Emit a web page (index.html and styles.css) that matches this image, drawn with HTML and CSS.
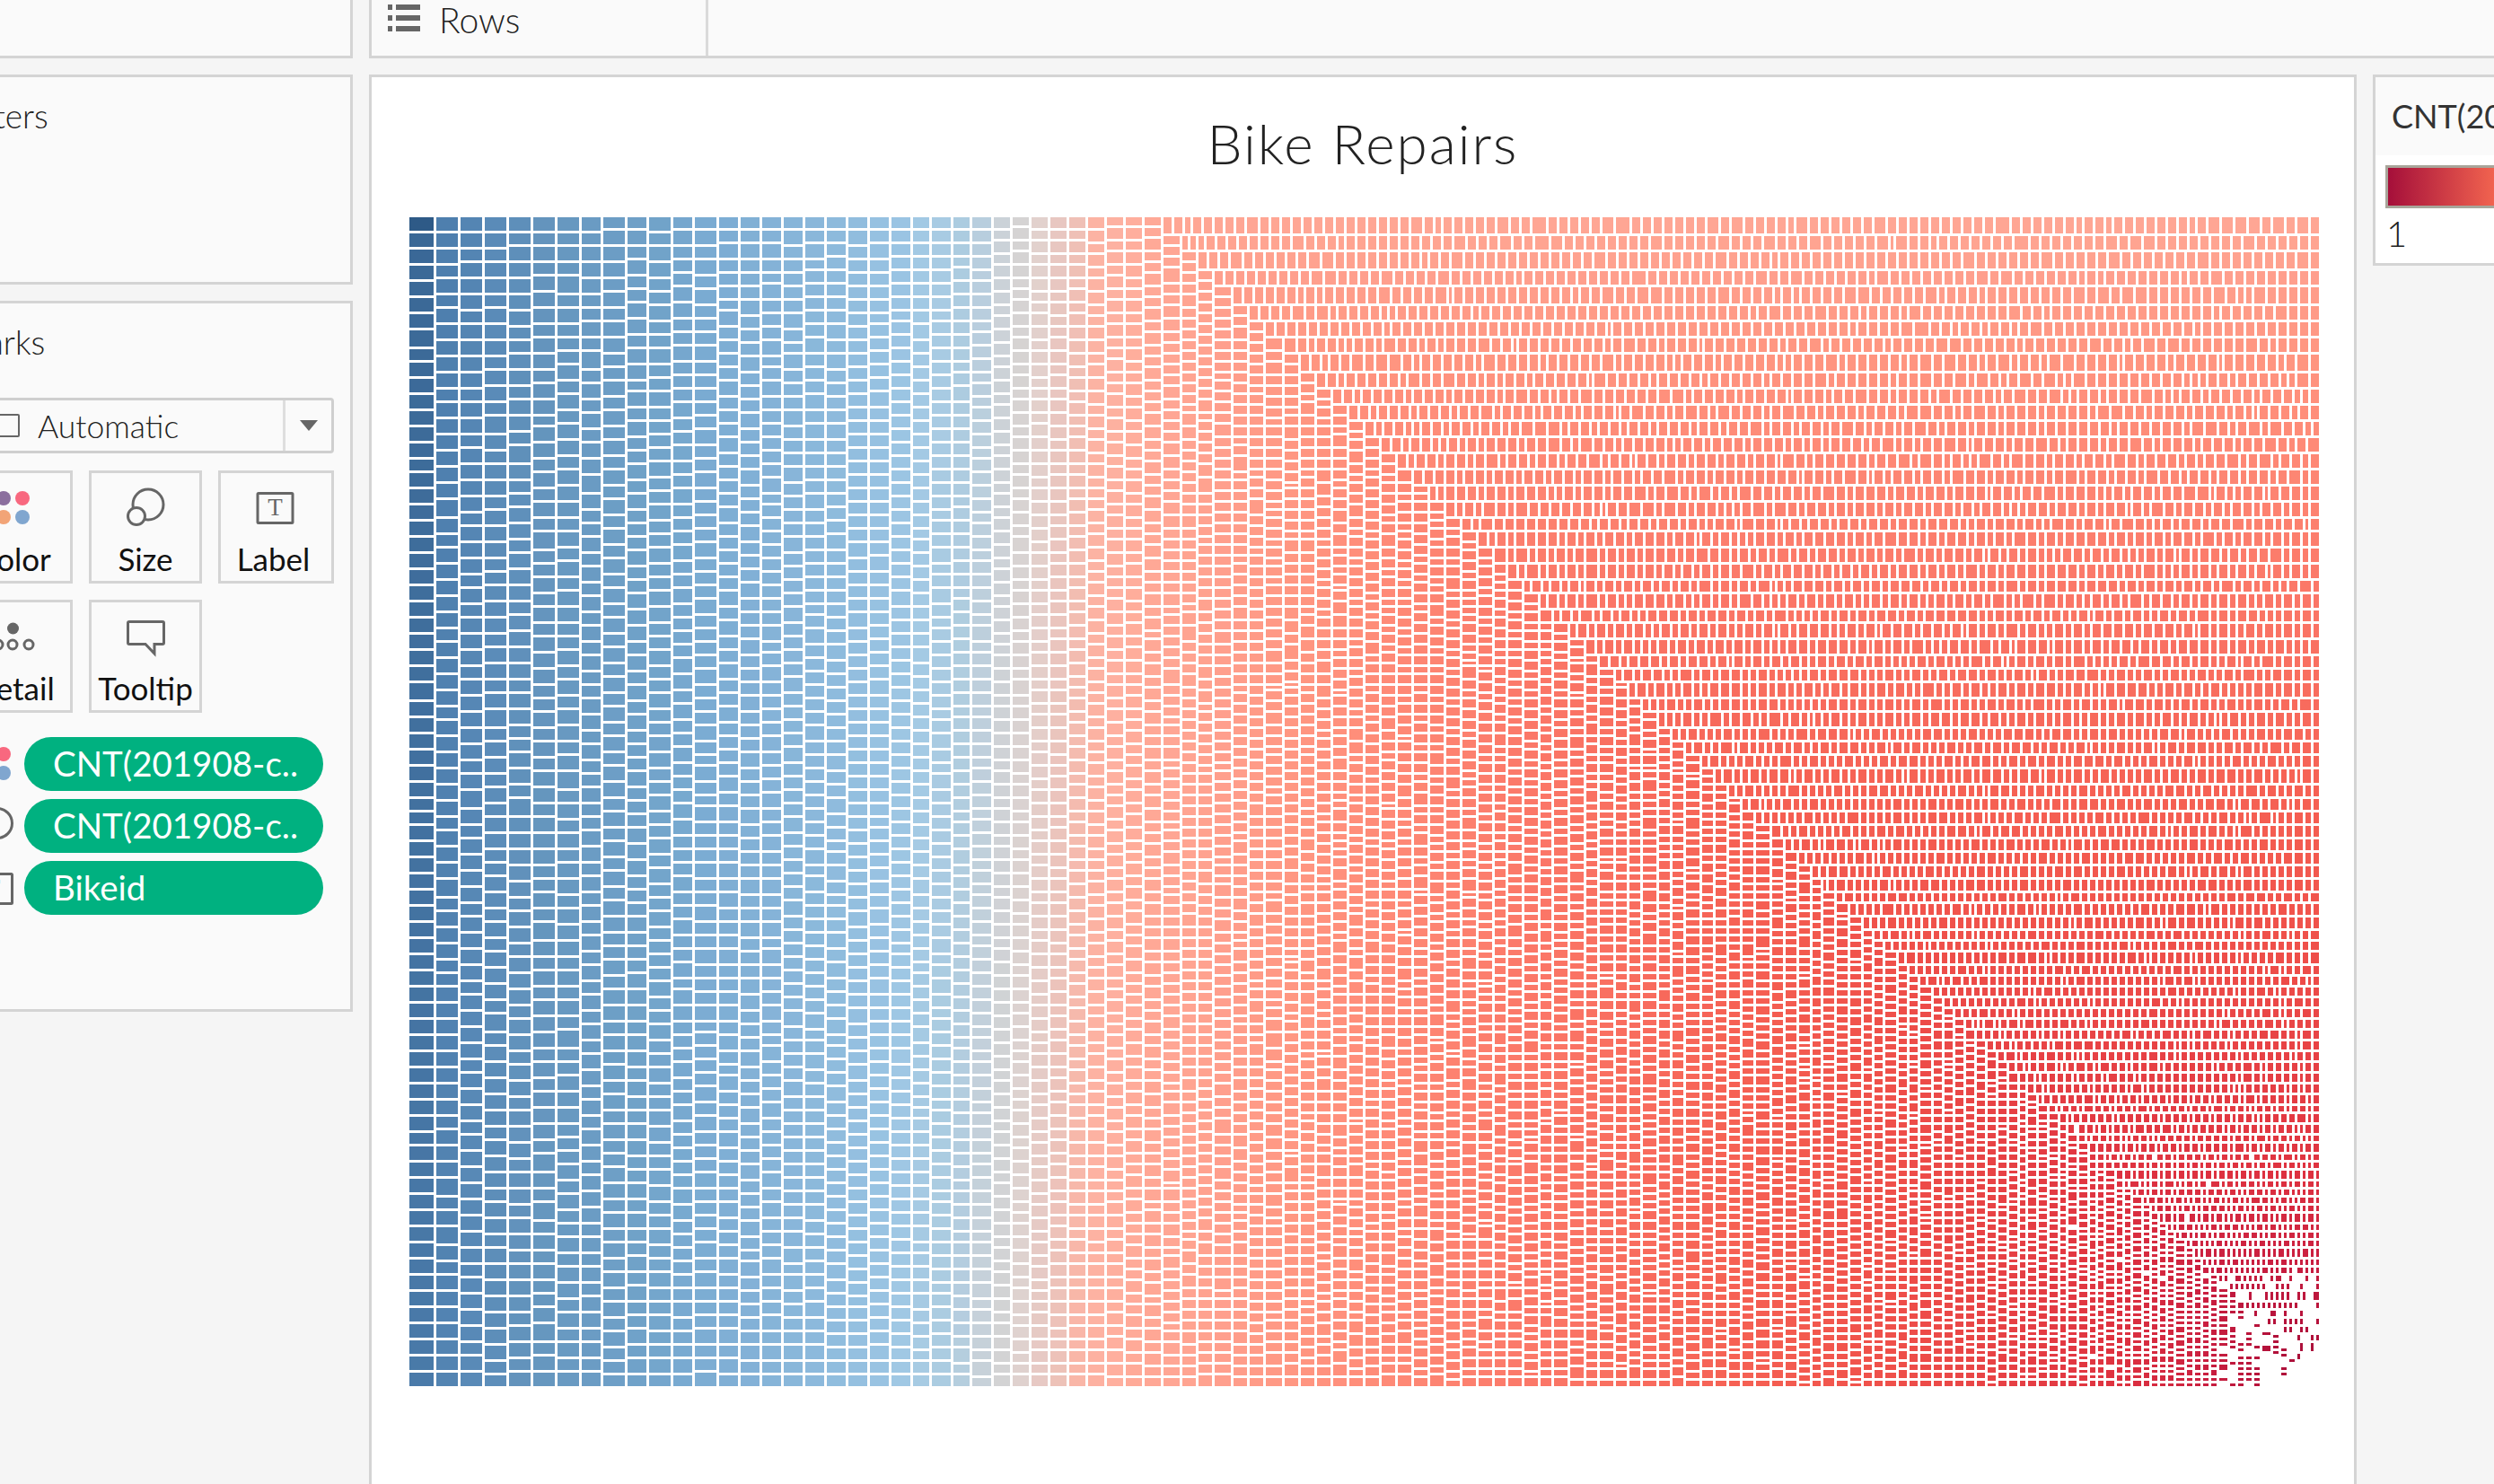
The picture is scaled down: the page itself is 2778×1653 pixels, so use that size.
FILE: index.html
```html
<!DOCTYPE html>
<html lang="en">
<head>
<meta charset="utf-8">
<title>Bike Repairs</title>
<link rel="stylesheet" href="styles.css">
</head>
<body>
<div class="app">
  <aside class="sidebar">
    <div class="panel shelf-stub"></div>
    <section class="panel filters"><h2 class="card-title">Filters</h2></section>
    <section class="panel marks">
      <h2 class="card-title">Marks</h2>
      <div class="dropdown">
        <span class="dropdown-check"></span>
        <span class="dropdown-text">Automatic</span>
        <span class="dropdown-arrow"><span class="triangle"></span></span>
      </div>
      <div class="mark-grid">
        <div class="mark-btn">
          <svg class="mark-icon" viewBox="0 0 60 48"><circle cx="16" cy="14" r="8" fill="#8b6f9e"/><circle cx="37" cy="14" r="8" fill="#f8687f"/><circle cx="16" cy="35" r="8" fill="#f2a477"/><circle cx="37" cy="35" r="8" fill="#80a6cf"/></svg>
          <span class="mark-label mark-label-nudged">Color</span>
        </div>
        <div class="mark-btn">
          <svg class="mark-icon" viewBox="0 0 60 48"><circle class="ico" cx="33" cy="21" r="17"/><circle class="ico ico-bg" cx="20" cy="34" r="9.5"/></svg>
          <span class="mark-label">Size</span>
        </div>
        <div class="mark-btn">
          <svg class="mark-icon" viewBox="0 0 60 48"><rect class="ico" x="9" y="8.5" width="39" height="33" rx="1"/><text class="ico-t" x="28.5" y="33" text-anchor="middle">T</text></svg>
          <span class="mark-label mark-label-nudged">Label</span>
        </div>
        <div class="mark-btn">
          <svg class="mark-icon" viewBox="0 0 60 48"><circle cx="26.5" cy="15" r="6.5" fill="#666"/><circle class="ico" cx="10" cy="33" r="5"/><circle class="ico" cx="26" cy="33" r="5"/><circle class="ico" cx="44" cy="33" r="5"/></svg>
          <span class="mark-label mark-label-nudged">Detail</span>
        </div>
        <div class="mark-btn">
          <svg class="mark-icon" viewBox="0 0 60 48"><path class="ico" d="M12 7.500H49a1.500 1.500 0 0 1 1.500 1.500V31a1.500 1.500 0 0 1-1.500 1.500H40V43L30 32.500H12A1.500 1.500 0 0 1 10.500 31V9A1.500 1.500 0 0 1 12 7.500Z"/></svg>
          <span class="mark-label">Tooltip</span>
        </div>
      </div>
      <ul class="pills">
        <li class="pill-row">
          <svg class="pill-icon" viewBox="0 0 60 60"><circle cx="28" cy="19" r="8" fill="#8b6f9e"/><circle cx="49" cy="19" r="8" fill="#f8687f"/><circle cx="28" cy="40" r="8" fill="#f2a477"/><circle cx="49" cy="40" r="8" fill="#80a6cf"/></svg>
          <span class="pill">CNT(201908-c..</span>
        </li>
        <li class="pill-row">
          <svg class="pill-icon" viewBox="0 0 60 60"><circle class="ico" cx="42" cy="27" r="16.500"/></svg>
          <span class="pill">CNT(201908-c..</span>
        </li>
        <li class="pill-row">
          <svg class="pill-icon" viewBox="0 0 60 60"><rect class="ico" x="17.500" y="14.500" width="41" height="33" rx="1"/><text class="ico-t" x="37" y="39" text-anchor="middle">T</text></svg>
          <span class="pill">Bikeid</span>
        </li>
      </ul>
    </section>
  </aside>
  <main class="workspace">
    <div class="rows-shelf">
      <div class="rows-cell">
        <svg class="rows-icon" viewBox="0 0 36 30"><path d="M0 0h5v6H0zM9 0h27v6H9zM0 12h5v6H0zM9 12h27v6H9zM0 24h5v6H0zM9 24h27v6H9z" fill="#666"/></svg>
        <span class="rows-text">Rows</span>
      </div>
    </div>
    <div class="stage">
      <section class="panel viz">
        <h1 class="viz-title">Bike Repairs</h1>
        <canvas id="treemap" class="treemap" width="2130" height="1305"></canvas>
      </section>
      <section class="panel legend">
        <h3 class="legend-title">CNT(201908-citibike-tripdata.csv)</h3>
        <div class="legend-body">
          <div class="legend-bar"></div>
          <span class="legend-min">1</span>
        </div>
      </section>
    </div>
  </main>
</div>
<script src="chart.js"></script>
</body>
</html>
```
FILE: styles.css
```css
* { box-sizing: border-box; }
html, body { margin: 0; height: 1653px; overflow: hidden; background: #f5f5f5; }
body { font-family: Lato, "Open Sans", sans-serif; color: #333; }
h1, h2, h3, ul { margin: 0; padding: 0; font-weight: 400; list-style: none; }

.app { display: flex; gap: 18px; width: 2841px; height: 1653px; margin-left: -63px; }
.sidebar { flex: 0 0 456px; display: flex; flex-direction: column; gap: 18px; }
.panel { background: #fafafa; border: 3px solid #d4d4d4; }

.shelf-stub { height: 68px; margin-top: -3px; }
.filters { height: 234px; padding: 21px 18px 0; }
.marks { height: 792px; padding: 21px 15px 0; }
.card-title { font-size: 37px; line-height: 44px; margin-left: -2px; color: #222; font-weight: 300; }

.dropdown { display: flex; align-items: center; height: 62px; margin-top: 40px; width: 417px; border: 3px solid #cfcfcf; border-radius: 4px; }
.dropdown-check { width: 26px; height: 26px; margin-left: 38px; border: 2px solid #666; border-radius: 2px; flex: none; }
.dropdown-text { font-size: 35.5px; margin-left: 20px; color: #222; flex: 1; font-weight: 300; }
.dropdown-arrow { flex: none; width: 54px; height: 100%; border-left: 3px solid #dedede; display: flex; align-items: center; justify-content: center; }
.triangle { width: 0; height: 0; border-left: 10px solid transparent; border-right: 10px solid transparent; border-top: 12px solid #666; }

.mark-grid { display: grid; grid-template-columns: 126px 126px 129px; gap: 18px; margin-top: 19px; }
.mark-btn { height: 126px; border: 3px solid #d4d4d4; padding-top: 14px; display: flex; flex-direction: column; align-items: center; }
.mark-icon { width: 60px; height: 48px; flex: none; display: block; }
.mark-label { font-size: 35px; line-height: 42px; margin-top: 12px; color: #111; white-space: nowrap; }
.mark-label-nudged { margin-right: 6px; }

.ico { fill: none; stroke: #666; stroke-width: 3; }
.ico-bg { fill: #fafafa; }
.ico-t { font-family: "Liberation Serif", serif; font-size: 27px; fill: #666; }

.pills { margin-top: 27px; display: flex; flex-direction: column; gap: 9px; }
.pill-row { display: flex; align-items: center; gap: 12px; height: 60px; }
.pill-icon { width: 60px; height: 60px; flex: none; }
.pill { flex: 0 0 333px; height: 60px; line-height: 58px; padding-left: 32px; border-radius: 30px; background: #00b180; color: #fff; font-size: 38.5px; white-space: nowrap; }

.workspace { flex: 1; display: flex; flex-direction: column; gap: 18px; min-width: 0; }
.rows-shelf { height: 65px; background: #fafafa; border-left: 3px solid #d4d4d4; border-bottom: 3px solid #d4d4d4; display: flex; }
.rows-cell { width: 375px; height: 62px; border-right: 3px solid #dadada; padding: 5px 0 0 18px; display: flex; gap: 21px; }
.rows-icon { width: 36px; height: 30px; flex: none; }
.rows-text { font-size: 39px; line-height: 34px; color: #222; font-weight: 300; }

.stage { display: flex; align-items: flex-start; gap: 18px; }
.viz { flex: 0 0 2214px; height: 1640px; background: #fff; padding: 0 0 0 42px; border-bottom: 0; }
.viz-title { height: 156px; padding-top: 38px; margin-left: -42px; width: 2208px; text-align: center; font-size: 62px; letter-spacing: 2px; line-height: 70px; font-weight: 300; color: #222; }
.treemap { display: block; }

.legend { flex: 0 0 500px; height: 213px; background: #fff; border-right: 0; }
.legend-title { height: 87px; background: #fafafa; padding: 21px 0 0 18px; font-size: 36px; line-height: 44px; white-space: nowrap; color: #333; }
.legend-body { padding: 11px 0 0 11px; }
.legend-bar { height: 48px; border: 3px solid #a8a59a; background: linear-gradient(90deg, #a50f3a, #f1634f 118px, #ff9b85 400px); }
.legend-min { display: block; font-size: 40px; line-height: 44px; margin: 6px 0 0 1px; font-weight: 300; color: #222; }
```
FILE: chart.js
```js
(function () {
  var canvas = document.getElementById('treemap');
  var ctx = canvas.getContext('2d');
  var W = 2130, H = 1305, STAIR_X = 840;

  var seed = 20190801;
  function rand() {
    seed = (seed + 0x6D2B79F5) | 0;
    var t = Math.imul(seed ^ (seed >>> 15), 1 | seed);
    t = (t + Math.imul(t ^ (t >>> 7), 61 | t)) ^ t;
    return ((t ^ (t >>> 14)) >>> 0) / 4294967296;
  }
  function lerpStops(stops, v) {
    if (v <= stops[0][0]) return stops[0][1];
    for (var i = 1; i < stops.length; i++) {
      if (v <= stops[i][0]) {
        var a = stops[i - 1], b = stops[i];
        return a[1] + (b[1] - a[1]) * (v - a[0]) / (b[0] - a[0]);
      }
    }
    return stops[stops.length - 1][1];
  }
  function hex(c) { return [parseInt(c.substr(1, 2), 16), parseInt(c.substr(3, 2), 16), parseInt(c.substr(5, 2), 16)]; }
  function colorAt(stops, v) {
    var i = 1;
    while (i < stops.length - 1 && v > stops[i][0]) i++;
    var a = stops[i - 1], b = stops[i];
    var k = Math.max(0, Math.min(1, (v - a[0]) / (b[0] - a[0])));
    var p = hex(a[1]), q = hex(b[1]);
    return 'rgb(' + Math.round(p[0] + (q[0] - p[0]) * k) + ',' + Math.round(p[1] + (q[1] - p[1]) * k) + ',' + Math.round(p[2] + (q[2] - p[2]) * k) + ')';
  }
  function snap(v) { return Math.round(v / 3) * 3; }

  // Cut a strip of length L into cells on the 3px grid; tiny marks vanish.
  function cuts(L, pitch, big, small) {
    var n = Math.max(1, Math.round(L / pitch)), w = [], total = 0, i;
    for (i = 0; i < n; i++) {
      var r = rand();
      var v = r < 0.1 ? big : r < 0.16 ? small : 1;
      w.push(v); total += v;
    }
    var out = [0], acc = 0;
    for (i = 0; i < n; i++) { acc += w[i]; out.push(snap(acc / total * L)); }
    return out;
  }

  // Leading columns
  var colStarts = [0, 30, 57, 84, 111, 138, 165, 192, 216, 243, 267, 294, 318, 345, 369, 393, 417, 441, 465, 489, 513, 537, 561, 582, 606, 627, 651, 672, 693, 714, 735, 756, 777, 798, 819, 840];
  var colPitch = [[0, 18], [1, 17.6], [6, 16.8], [12, 15.8], [22, 15], [26, 14.2], [34, 13.2]];
  var colColors = [[0, '#3a6896'], [1, '#4e7fae'], [2, '#5485b3'], [3, '#5a8bb8'], [4, '#5e8fba'], [5, '#6494bd'], [6, '#6798c0'], [8, '#6c9dc5'], [10, '#71a3c9'], [12, '#7aabd2'], [15, '#84b2d7'], [18, '#8dbadc'], [21, '#9ac4e3'], [22, '#a2c9e4'], [23, '#a8cbe3'], [24, '#accce0'], [25, '#b8cede'], [26, '#cbd2d8'], [27, '#d5d3d3'], [28, '#e2d1cd'], [29, '#e8c7c1'], [30, '#efc0b6'], [31, '#fcb3a3'], [32, '#fdb1a1'], [33, '#ffae9d'], [34, '#ffa997'], [35, '#ffa694']];

  var c, i;
  for (c = 0; c < colStarts.length - 1; c++) {
    var x = colStarts[c], cw = colStarts[c + 1] - x - 3;
    var edges = cuts(H, lerpStops(colPitch, c), 1.12, 0.88);
    for (i = 0; i < edges.length - 1; i++) {
      var h = edges[i + 1] - edges[i] - 3;
      if (h <= 0) continue;
      ctx.fillStyle = colorAt(colColors, c + 0.8 * i / edges.length);
      ctx.fillRect(x, edges[i], cw, h);
    }
  }
  ctx.fillStyle = '#2e5a87';
  ctx.fillRect(0, 0, 27, 15);

  // Staircase of alternating rows and columns (stops keyed by x on the page)
  var off = 456;
  var stripPitch = [[1296, 19.5], [1700, 17], [2000, 15], [2100, 13], [2300, 11], [2360, 9.7], [2583, 9.5]];
  var cellPitch = [[1296, 12.4], [1700, 10.7], [2000, 9.6], [2200, 8.9], [2350, 7.8], [2440, 6.8], [2490, 6.2], [2583, 5.5]];
  var stairColors = [[1296, '#ffa694'], [1480, '#ff917c'], [1700, '#fb7868'], [1950, '#f55f52'], [2100, '#ef504a'], [2350, '#df3340'], [2450, '#cb2040'], [2520, '#b5123b'], [2583, '#a50f3a']];

  function dropChance(pageX) {
    if (pageX < 2470) return 0;
    return Math.min(0.7, 0.2 + (pageX - 2470) / 150);
  }
  function cutCorner(x, y) {
    var cx = 2515 - off, cy = 1472 - 242, r = 68;
    if (x <= cx || y <= cy) return false;
    return (x - cx) * (x - cx) + (y - cy) * (y - cy) > r * r;
  }

  var fx = STAIR_X, fy = 21, px = STAIR_X, py = 0;
  while (px < W - 3 && py < H - 3) {
    var pitch = lerpStops(stripPitch, px + off);
    var nextY;
    if (py === 0) { nextY = 21; }
    else { fy += pitch; nextY = snap(fy); }
    fx += pitch;
    var nextX = snap(fx);
    ctx.fillStyle = colorAt(stairColors, px + off);

    var cp = lerpStops(cellPitch, px + off);
    var drop = dropChance(px + off);
    // row: strip from the current x to the right edge
    var rowEdges = cuts(W - px, cp, 1.3, 0.72);
    for (i = 0; i < rowEdges.length - 1; i++) {
      var rw = rowEdges[i + 1] - rowEdges[i] - 3;
      if (rw > 0 && rand() >= drop && !cutCorner(px + rowEdges[i], py)) ctx.fillRect(px + rowEdges[i], py, rw, nextY - py - 3);
    }
    // column: strip from the next row's y to the bottom
    var colEdges = cuts(H - nextY, cp, 1.3, 0.72);
    for (i = 0; i < colEdges.length - 1; i++) {
      var ch = colEdges[i + 1] - colEdges[i] - 3;
      if (ch > 0 && rand() >= drop && !cutCorner(px, nextY + colEdges[i])) ctx.fillRect(px, nextY + colEdges[i], nextX - px - 3, ch);
    }
    px = nextX;
    py = nextY;
  }
})();
```
